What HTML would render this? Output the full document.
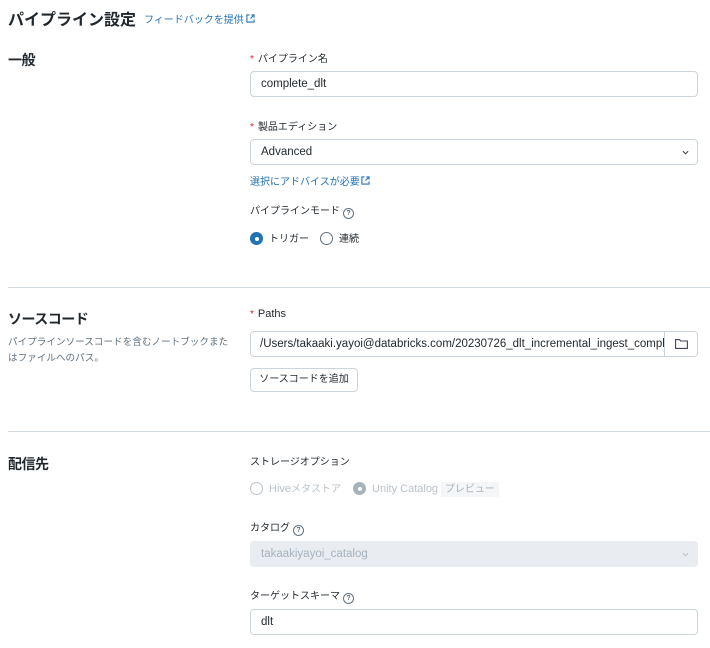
<!DOCTYPE html>
<html><head><meta charset="utf-8"><style>
body{margin:0;width:710px;height:648px;background:#fff;font-family:"Liberation Sans","Noto Sans CJK JP",sans-serif;color:#1f272d;position:relative;overflow:hidden}
.a{position:absolute;white-space:nowrap}
.lbl{font-size:10px;color:#1f272d}
.req{color:#db1f2f;font-size:10px;margin-right:4px}
.inp{position:absolute;left:250px;width:446px;height:24px;border:1px solid #cbd5dc;border-radius:4px;font-size:11.5px;line-height:24px;box-sizing:content-box}
.inp span{padding-left:10px}
.h{font-size:14px;font-weight:bold;letter-spacing:-0.5px}
.hr{position:absolute;left:8px;right:0;height:1px;background:#d1d9e1}
.rad{display:inline-block;width:11px;height:11px;border:1px solid #5f7281;border-radius:50%;vertical-align:-3px;margin-right:6px;position:relative}
.blue{color:#2272b4}
.q{display:inline-block;width:9px;height:9px;border:1px solid #5f7281;border-radius:50%;font-size:7px;line-height:9px;text-align:center;vertical-align:-1px;margin-left:3px}
</style></head><body>
<div class="a" style="left:8px;top:6px;font-size:16px;font-weight:bold">パイプライン設定</div>
<div class="a blue" style="left:144px;top:11px;font-size:10px">フィードバックを提供<svg width="9" height="9" viewBox="0 0 10 10" style="margin-left:2px"><path d="M4 1H1v8h8V6M6 1h3v3M9 1L5 5" fill="none" stroke="#2272b4" stroke-width="1.2"/></svg></div>

<div class="a h" style="left:8px;top:50px">一般</div>
<div class="a lbl" style="left:250px;top:50px"><span class="req">*</span>パイプライン名</div>
<div class="inp" style="top:71px"><span>complete_dlt</span></div>
<div class="a lbl" style="left:250px;top:118px"><span class="req">*</span>製品エディション</div>
<div class="inp" style="top:139px"><span>Advanced</span><svg style="position:absolute;right:8px;top:10px" width="7" height="5" viewBox="0 0 8 5"><path d="M1 1l3 3 3-3" fill="none" stroke="#333" stroke-width="1.2"/></svg></div>
<div class="a blue" style="left:250px;top:173px;font-size:10px">選択にアドバイスが必要<svg width="9" height="9" viewBox="0 0 10 10" style="margin-left:1px"><path d="M4 1H1v8h8V6M6 1h3v3M9 1L5 5" fill="none" stroke="#2272b4" stroke-width="1.2"/></svg></div>
<div class="a lbl" style="left:250px;top:202px">パイプラインモード<span class="q">?</span></div>
<div class="a lbl" style="left:250px;top:230px"><span class="rad" style="border-color:#2272b4;background:#2272b4"><span style="position:absolute;left:3.5px;top:3.5px;width:4px;height:4px;background:#fff;border-radius:50%"></span></span>トリガー<span style="display:inline-block;width:11px"></span><span class="rad"></span>連続</div>
<div class="hr" style="top:287px"></div>

<div class="a h" style="left:8px;top:309px">ソースコード</div>
<div class="a" style="left:8px;top:335px;font-size:9.6px;color:#5f7281;line-height:16px">パイプラインソースコードを含むノートブックまた<br>はファイルへのパス。</div>
<div class="a lbl" style="left:250px;top:308px"><span class="req">*</span><span style="font-size:11px">Paths</span></div>
<div class="inp" style="top:331px;overflow:hidden"><span style="padding-left:9px">/Users/takaaki.yayoi@databricks.com/20230726_dlt_incremental_ingest_comple</span><div style="position:absolute;left:413px;top:0;width:33px;height:24px;border-left:1px solid #cbd5dc;background:#fff"><svg style="position:absolute;left:10px;top:7px" width="13" height="10" viewBox="0 0 13 10"><path d="M.6.6h4l1 1.4h6.8v7.4H.6z" fill="none" stroke="#445" stroke-width="1.1"/></svg></div></div>
<div class="a lbl" style="left:250px;top:368px;width:106px;height:22px;border:1px solid #cbd5dc;border-radius:4px;line-height:22px;text-align:center">ソースコードを追加</div>
<div class="hr" style="top:431px"></div>

<div class="a h" style="left:8px;top:454px">配信先</div>
<div class="a lbl" style="left:250px;top:453px">ストレージオプション</div>
<div class="a lbl" style="left:250px;top:480px;color:#b9c2ca"><span class="rad" style="border-color:#b9c2ca"></span><span style="font-size:11px">Hive</span>メタストア<span style="display:inline-block;width:12px"></span><span class="rad" style="border-color:#a7b2bc;background:#a7b2bc"><span style="position:absolute;left:3.5px;top:3.5px;width:4px;height:4px;background:#fff;border-radius:50%"></span></span><span style="font-size:11px">Unity Catalog</span> <span style="background:#f4f6f8;padding:2px 4px;color:#a7b2bc">プレビュー</span></div>
<div class="a lbl" style="left:250px;top:519px">カタログ<span class="q">?</span></div>
<div class="inp" style="top:541px;background:#e9edf1;border-color:#e9edf1;color:#a7b2bc"><span>takaakiyayoi_catalog</span><svg style="position:absolute;right:8px;top:10px" width="7" height="5" viewBox="0 0 8 5"><path d="M1 1l3 3 3-3" fill="none" stroke="#b9c2ca" stroke-width="1.2"/></svg></div>
<div class="a lbl" style="left:250px;top:587px">ターゲットスキーマ<span class="q">?</span></div>
<div class="inp" style="top:609px"><span>dlt</span></div>
</body></html>
